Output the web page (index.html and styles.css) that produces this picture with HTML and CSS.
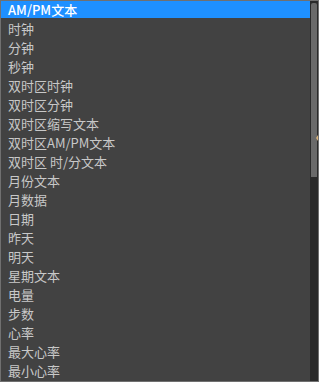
FILE: index.html
```html
<!DOCTYPE html>
<html lang="zh">
<head>
<meta charset="utf-8">
<title>下拉列表</title>
<link rel="stylesheet" href="styles.css">
</head>
<body>
<div class="dropdown">
  <ul class="items">
    <li class="item selected">AM/PM文本</li>
    <li class="item">时钟</li>
    <li class="item">分钟</li>
    <li class="item">秒钟</li>
    <li class="item">双时区时钟</li>
    <li class="item">双时区分钟</li>
    <li class="item">双时区缩写文本</li>
    <li class="item">双时区AM/PM文本</li>
    <li class="item">双时区 时/分文本</li>
    <li class="item">月份文本</li>
    <li class="item">月数据</li>
    <li class="item">日期</li>
    <li class="item">昨天</li>
    <li class="item">明天</li>
    <li class="item">星期文本</li>
    <li class="item">电量</li>
    <li class="item">步数</li>
    <li class="item">心率</li>
    <li class="item">最大心率</li>
    <li class="item">最小心率</li>
  </ul>
  <div class="scrollbar">
    <div class="thumb"></div>
  </div>
  <span class="cursor-mark"></span>
</div>
</body>
</html>
```
FILE: styles.css
```css
html, body {
  margin: 0;
  padding: 0;
  background: #424242;
}
.dropdown {
  position: relative;
  width: 317px;
  height: 380px;
  border: 1px solid #707070;
  display: flex;
  background: #424242;
}
.items {
  list-style: none;
  margin: 0;
  padding: 0;
  flex: 1;
  font-family: "Noto Sans CJK SC", "Liberation Sans", sans-serif;
  font-size: 13px;
  color: #c8c8c8;
}
.item {
  height: 19px;
  line-height: 17px;
  padding-left: 7px;
  white-space: nowrap;
}
.item.selected {
  background: #1e90ff;
  color: #ffffff;
  height: 17px;
  margin-bottom: 2px;
  font-weight: 500;
}
.scrollbar {
  width: 6px;
  border-left: 1px solid #2a2a2a;
  border-right: 1px solid #2a2a2a;
  background: #2a2a2a;
  padding-top: 2px;
}
.thumb {
  height: 174px;
  background: #6a6a6a;
  border-radius: 2px 2px 0 0;
}
.cursor-mark {
  position: absolute;
  right: 0;
  top: 134px;
  width: 0;
  height: 0;
  border-top: 3px solid transparent;
  border-bottom: 3px solid transparent;
  border-right: 2px solid #d9b27a;
}
```
